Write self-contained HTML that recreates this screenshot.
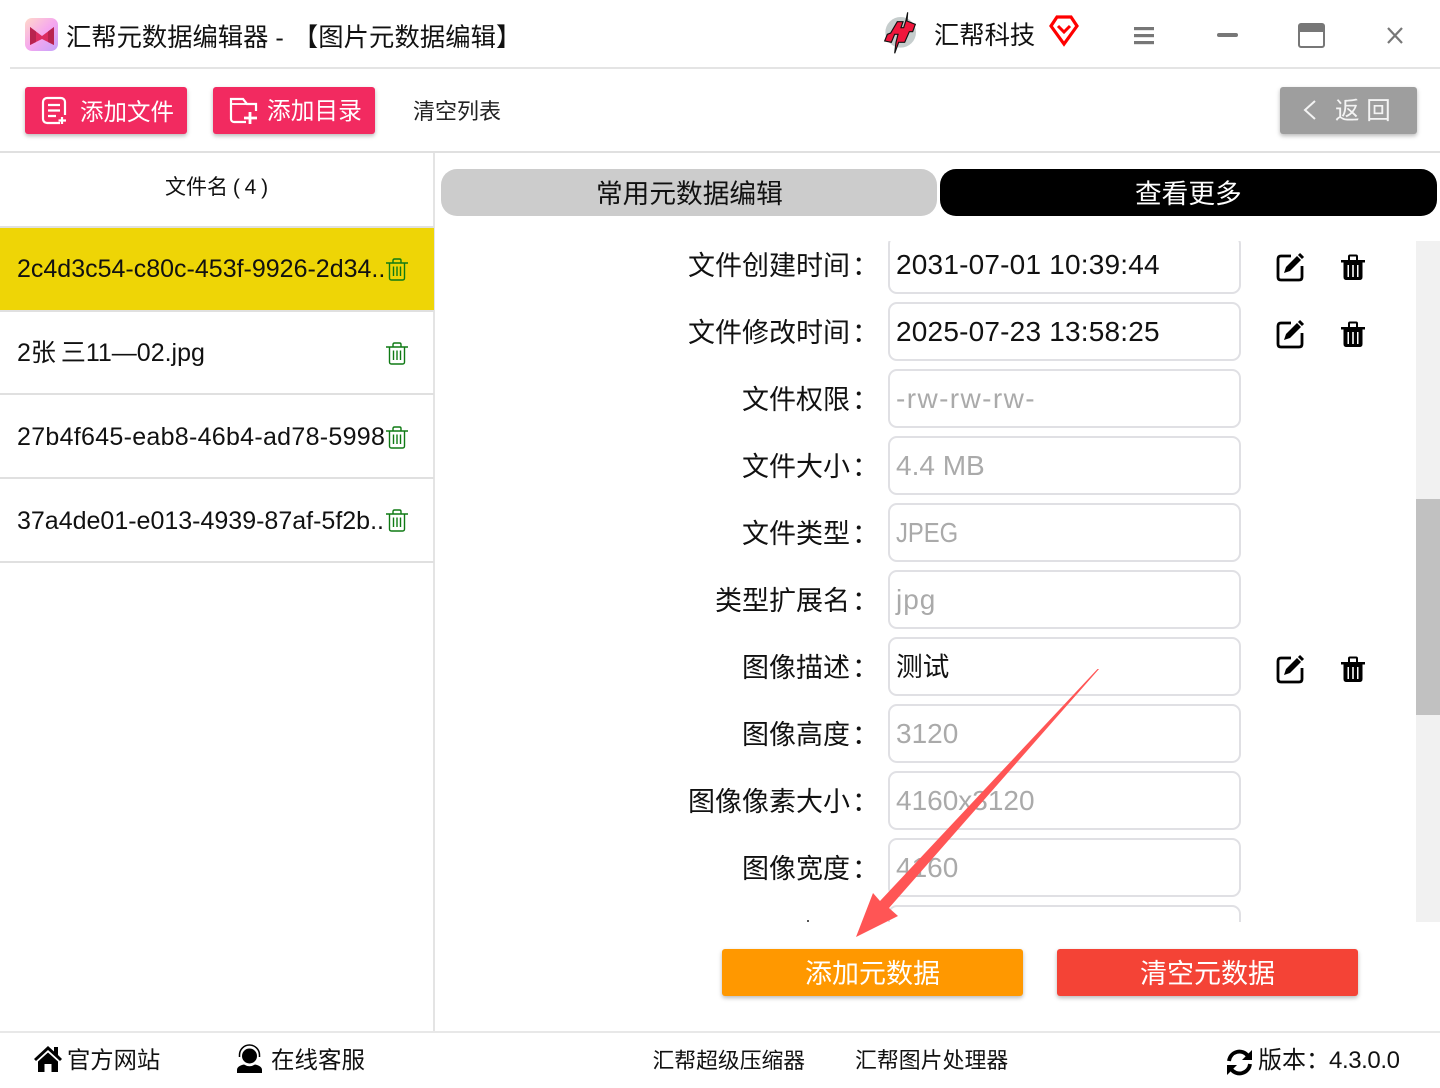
<!DOCTYPE html>
<html lang="zh"><head><meta charset="utf-8"><title>汇帮元数据编辑器</title>
<style>
*{box-sizing:border-box;margin:0;padding:0}
html,body{width:1440px;height:1088px;overflow:hidden;background:#fff;font-family:"Liberation Sans","Noto Sans CJK SC",sans-serif;color:#111}
.t{position:absolute;white-space:nowrap;line-height:1}
.b{position:absolute}
.btn{position:absolute;border-radius:3px;box-shadow:0 2px 4px rgba(0,0,0,.28)}
.in{position:absolute;left:888px;width:353px;height:59px;border:2px solid #e0e0e4;border-radius:9px;background:#fff}
.in span{position:absolute;left:6px;top:13px;font-size:28px;line-height:30px;white-space:nowrap;color:#aaa}
.in span.v{color:#111;letter-spacing:.2px}
.lb{position:absolute;right:561px;font-size:27px;line-height:30px;white-space:nowrap;color:#111}
.lb b{font-weight:400;margin-left:2px}
svg{position:absolute;overflow:visible}
.row{position:absolute;left:0;width:434px;height:84px;border-bottom:2px solid #e0e0e0}
.row span{position:absolute;left:17px;top:26px;font-size:25px;line-height:30px;white-space:nowrap}
</style></head><body>
<svg style="left:25px;top:18px" width="34" height="34" viewBox="0 0 34 34"><defs><linearGradient id="g" x1="0" y1="0" x2="1" y2="1"><stop offset="0" stop-color="#ffd9c8"/><stop offset=".5" stop-color="#f6a8ee"/><stop offset="1" stop-color="#c4a2fb"/></linearGradient></defs><rect width="33" height="33" rx="7" fill="url(#g)"/><path d="M5 9l12 9 12-9v18l-12-6-12 6z" fill="#dc2c60"/><path d="M5 9l6 4.500v10.500l-6 3zM29 9l-6 4.500v10.500l6 3z" fill="#b8234f"/></svg>
<div class="t" style="left:66px;top:24px;font-size:25.3px;line-height:28px">汇帮元数据编辑器&nbsp;-&nbsp;<span style="margin-left:2px;letter-spacing:.1px">【图片元数据编辑】</span></div>
<svg style="left:870px;top:5px" width="60" height="55" viewBox="0 0 180 165"><circle cx="92" cy="82" r="46" fill="#c6cdcd"/><path d="M82 50L99 50L93 68L101 68L108 46L113 22L111 48L136 58L128 80L118 80L104 112L86 112L74 145L78 112L84 88L74 88L64 112L44 108L52 88L62 84Z" fill="#f0163c" stroke="#111" stroke-width="3.500" stroke-linejoin="miter"/></svg>
<div class="t" style="left:934px;top:22px;font-size:25.300px;line-height:28px">汇帮科技</div>
<svg style="left:1049px;top:15px" width="30" height="32" viewBox="0 0 30 32" fill="none" stroke="#f00" stroke-width="3.2"><path d="M8 2H22L28 11L15 29L2 11Z" stroke-linejoin="miter"/><path d="M9 11L15 17L21 11" stroke-width="3"/></svg>
<svg style="left:1133px;top:27px" width="22" height="18" fill="#777"><rect x="1" y="0" width="20" height="3.2"/><rect x="1" y="7" width="20" height="3.2"/><rect x="1" y="14" width="20" height="3.2"/></svg>
<div class="b" style="left:1217px;top:33px;width:21px;height:4px;border-radius:2px;background:#777"></div>
<svg style="left:1298px;top:23px" width="27" height="25"><rect x="1" y="1" width="25" height="23" rx="2" fill="#fff" stroke="#777" stroke-width="2"/><path d="M1 3a2 2 0 012-2h21a2 2 0 012 2v6H1z" fill="#777"/></svg>
<svg style="left:1386px;top:27px" width="18" height="17" stroke="#777" stroke-width="2.2"><path d="M2 1L16 16M16 1L2 16"/></svg>
<div class="b" style="left:10px;top:67px;width:1430px;height:2px;background:#e4e4e4"></div>

<div class="btn" style="left:25px;top:87px;width:162px;height:47px;background:#f22a60"></div>
<svg style="left:41px;top:97px" width="29" height="28" fill="none" stroke="#fff" stroke-width="2.2"><path d="M19 26H6a4 4 0 01-4-4V5a4 4 0 014-4h14a4 4 0 014 4v13"/><path d="M7 8H19M7 13.500H19M7 19H15"/><path d="M21 20V27M17.500 23.500H25" stroke-width="2.200"/></svg>
<div class="t" style="left:80px;top:98px;font-size:23.500px;line-height:28px;color:#fff">添加文件</div>
<div class="btn" style="left:213px;top:87px;width:162px;height:47px;background:#f22a60"></div>
<svg style="left:229px;top:97px" width="30" height="28" fill="none" stroke="#fff" stroke-width="2.2"><path d="M17 25H5a3 3 0 01-3-3V2H14L18 7H27V14"/><path d="M2 7H18" stroke-width="1.800"/><path d="M21 15V27M15 21H28" stroke-width="2.800"/></svg>
<div class="t" style="left:267px;top:98px;font-size:23.700px;line-height:28px;color:#fff">添加目录</div>
<div class="t" style="left:413px;top:99px;font-size:22px;line-height:26px;color:#222">清空列表</div>
<div class="btn" style="left:1280px;top:87px;width:137px;height:47px;background:#9e9e9e"></div>
<svg style="left:1302px;top:99px" width="16" height="22" fill="none" stroke="#f4f4f4" stroke-width="2"><path d="M13 2L3 11L13 20"/></svg>
<div class="t" style="left:1335px;top:98px;font-size:24.500px;line-height:28px;color:#f4f4f4">返 回</div>
<div class="b" style="left:0;top:151px;width:1440px;height:2px;background:#e0e0e0"></div>

<div class="b" style="left:433px;top:153px;width:2px;height:879px;background:#e4e4e4"></div>
<div class="t" style="left:165px;top:175px;font-size:21px;line-height:26px;word-spacing:-1px">文件名 ( 4 )</div>
<div class="b" style="left:0;top:226px;width:434px;height:2px;background:#e0e0e0"></div>
<div class="row" style="top:228px;background:#eed506"><span>2c4d3c54-c80c-453f-9926-2d34..</span></div>
<div class="row" style="top:311px;height:84px"><span style="top:27px;word-spacing:-2px">2张 三11—02.jpg</span></div>
<div class="row" style="top:395px;height:84px"><span style="top:27px;letter-spacing:.29px">27b4f645-eab8-46b4-ad78-5998</span></div>
<div class="row" style="top:479px;height:84px"><span style="top:27px">37a4de01-e013-4939-87af-5f2b..</span></div>
<svg width="0" height="0" style="position:absolute"><defs>
<g id="gt" fill="none" stroke="#0f7a14" stroke-width="1.400"><path d="M0 5H22M7 5V2.500Q7 1 8.500 1H13.500Q15 1 15 2.500V5M3.500 5V20Q3.500 22 5.500 22H16.500Q18.500 22 18.500 20V5M7.500 8.500V18M11 8.500V18M14.500 8.500V18"/></g>
<g id="ed" fill="none"><path d="M15 3H5Q2 3 2 6V24Q2 27 5 27H23Q26 27 26 24V13" stroke="#000" stroke-width="2.800"/><path d="M8 20L10 14L21 3L25 7L14 18Z" fill="#000"/><path d="M23 1L27 5" stroke="#000" stroke-width="3"/></g>
<g id="tr"><path d="M0 6H24V8.500H0zM7 6V2.500Q7 .5 9 .5H15Q17 .5 17 2.500V6H15V2.500H9V6z" fill="#000"/><path d="M2.500 8H21.500V23Q21.500 26 18.500 26H5.500Q2.500 26 2.500 23zM6.500 11V23H8V11zM11.200 11V23H12.800V11zM16 11V23H17.500V11z" fill="#000" fill-rule="evenodd"/></g>
</defs></svg>
<svg style="left:386px;top:258px" width="22" height="23"><use href="#gt"/></svg>
<svg style="left:386px;top:342px" width="22" height="23"><use href="#gt"/></svg>
<svg style="left:386px;top:426px" width="22" height="23"><use href="#gt"/></svg>
<svg style="left:386px;top:509px" width="22" height="23"><use href="#gt"/></svg>

<div class="b" style="left:441px;top:169px;width:496px;height:47px;border-radius:16px;background:#ccc"></div>
<div class="t" style="left:596px;top:180px;font-size:26.700px;line-height:29px;color:#111">常用元数据编辑</div>
<div class="b" style="left:940px;top:169px;width:497px;height:47px;border-radius:16px;background:#000"></div>
<div class="t" style="left:1135px;top:180px;font-size:26.700px;line-height:29px;color:#fff">查看更多</div>

<div class="b" style="left:441px;top:241px;width:999px;height:681px;overflow:hidden">
<div class="b" style="left:975px;top:0;width:24px;height:681px;background:#f1f1f1"></div>
<div class="b" style="left:975px;top:258px;width:24px;height:216px;background:#c1c1c1"></div>
<div style="position:absolute;left:-441px;top:-241px;width:1440px;height:1100px">
<div class="lb" style="top:251px">文件创建时间<b>：</b></div><div class="in" style="top:235px"><span class="v">2031-07-01 10:39:44</span></div>
<div class="lb" style="top:318px">文件修改时间<b>：</b></div><div class="in" style="top:302px"><span class="v">2025-07-23 13:58:25</span></div>
<div class="lb" style="top:385px">文件权限<b>：</b></div><div class="in" style="top:369px"><span style="letter-spacing:1.400px">-rw-rw-rw-</span></div>
<div class="lb" style="top:452px">文件大小<b>：</b></div><div class="in" style="top:436px"><span>4.4 MB</span></div>
<div class="lb" style="top:519px">文件类型<b>：</b></div><div class="in" style="top:503px"><span style="transform:scaleX(.85);transform-origin:0 50%">JPEG</span></div>
<div class="lb" style="top:586px">类型扩展名<b>：</b></div><div class="in" style="top:570px"><span style="letter-spacing:1px">jpg</span></div>
<div class="lb" style="top:653px">图像描述<b>：</b></div><div class="in" style="top:637px"><span class="v" style="font-size:26.700px;letter-spacing:0">测试</span></div>
<div class="lb" style="top:720px">图像高度<b>：</b></div><div class="in" style="top:704px"><span>3120</span></div>
<div class="lb" style="top:787px">图像像素大小<b>：</b></div><div class="in" style="top:771px"><span>4160x3120</span></div>
<div class="lb" style="top:854px">图像宽度<b>：</b></div><div class="in" style="top:838px"><span>4160</span></div>
<div class="in" style="top:905px"></div>
<div class="b" style="left:807px;top:920px;width:2px;height:2px;background:#555"></div>
</div></div>
<svg style="left:1276px;top:253px" width="28" height="30"><use href="#ed"/></svg>
<svg style="left:1341px;top:254px" width="24" height="27"><use href="#tr"/></svg>
<svg style="left:1276px;top:320px" width="28" height="30"><use href="#ed"/></svg>
<svg style="left:1341px;top:321px" width="24" height="27"><use href="#tr"/></svg>
<svg style="left:1276px;top:655px" width="28" height="30"><use href="#ed"/></svg>
<svg style="left:1341px;top:656px" width="24" height="27"><use href="#tr"/></svg>

<div class="btn" style="left:722px;top:949px;width:301px;height:47px;background:#ff9800"></div>
<div class="t" style="left:805px;top:960px;font-size:27px;line-height:29px;color:#fff">添加元数据</div>
<div class="btn" style="left:1057px;top:949px;width:301px;height:47px;background:#f44336"></div>
<div class="t" style="left:1140px;top:960px;font-size:27px;line-height:29px;color:#fff">清空元数据</div>

<svg style="left:0;top:0;pointer-events:none" width="1440" height="1088"><path d="M1099 669L1097.500 669L880 901L873 893L856 937L898 916L889 908Z" fill="#ff5555"/></svg>

<div class="b" style="left:0;top:1031px;width:1440px;height:2px;background:#e8e8e8"></div>
<svg style="left:33px;top:1045px" width="30" height="28" viewBox="0 0 30 28"><path d="M15 1L1 14L3 16L15 5L27 16L29 14L25 10V2H21V6.500Z" fill="#000"/><path d="M5 16.500L15 7.500L25 16.500V27H18.500V19H11.500V27H5Z" fill="#000"/></svg>
<div class="t" style="left:67px;top:1047px;font-size:23.300px;line-height:26px">官方网站</div>
<svg style="left:236px;top:1045px" width="28" height="28" viewBox="0 0 28 28"><circle cx="13.500" cy="11" r="7.500" fill="#000"/><path d="M3.500 12V10a10 10 0 0120 0v2" fill="none" stroke="#000" stroke-width="1.500"/><path d="M1 28V25Q1 21 8 19.500Q13.500 23 19 19.500Q26 21 26 25V28Z" fill="#000"/></svg>
<div class="t" style="left:271px;top:1047px;font-size:23.500px;line-height:26px">在线客服</div>
<div class="t" style="left:652.500px;top:1047.500px;font-size:21.800px;line-height:26px">汇帮超级压缩器</div>
<div class="t" style="left:855px;top:1047.500px;font-size:21.900px;line-height:26px">汇帮图片处理器</div>
<svg style="left:1226px;top:1049px" width="27" height="27" viewBox="0 0 27 27" fill="none" stroke="#000" stroke-width="3.800"><path d="M3 12A10.500 10.500 0 0122 7"/><path d="M24 15A10.500 10.500 0 015 20"/><path d="M26 1V11H16Z" fill="#000" stroke="none"/><path d="M1 26V16H11Z" fill="#000" stroke="none"/></svg>
<div class="t" style="left:1258px;top:1047px;font-size:24px;line-height:27px">版本：<span style="letter-spacing:-.4px;margin-left:-1px">4.3.0.0</span></div>
</body></html>
